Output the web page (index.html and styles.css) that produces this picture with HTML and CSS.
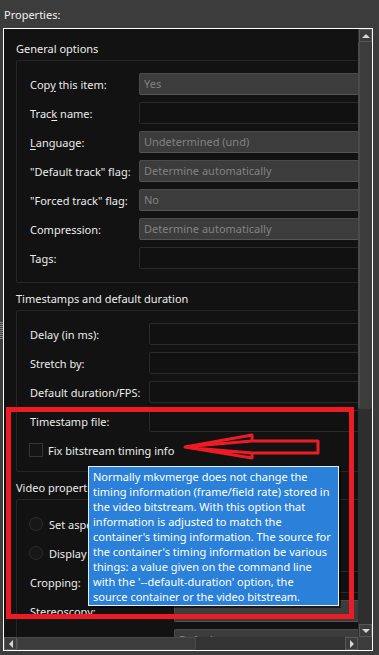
FILE: index.html
```html
<!DOCTYPE html>
<html>
<head>
<meta charset="utf-8">
<link rel="stylesheet" href="styles.css">
</head>
<body>
<div class="title">Properties:</div>
<div class="main">
  <div class="side"><div class="grip"></div></div>
  <div class="frame">
    <div class="viewport">
      <div class="content">
        <div class="group-title">General options</div>
        <div class="group g1">
          <div class="row"><span class="lbl">Cop<u>y</u> this item:</span><div class="combo">Yes</div></div>
          <div class="row"><span class="lbl">Trac<u>k</u> name:</span><div class="edit"></div></div>
          <div class="row"><span class="lbl"><u>L</u>anguage:</span><div class="combo">Undetermined (und)</div></div>
          <div class="row"><span class="lbl">"Default track" flag:</span><div class="combo">Determine automatically</div></div>
          <div class="row"><span class="lbl">"Forced track" flag:</span><div class="combo">No</div></div>
          <div class="row"><span class="lbl">Compression:</span><div class="combo">Determine automatically</div></div>
          <div class="row"><span class="lbl">Tags:</span><div class="edit"></div></div>
        </div>
        <div class="group-title">Timestamps and default duration</div>
        <div class="group g2">
          <div class="row"><span class="lbl">Delay (in ms):</span><div class="edit"></div></div>
          <div class="row"><span class="lbl">Stretch by:</span><div class="edit"></div></div>
          <div class="row"><span class="lbl">Default duration/FPS:</span><div class="edit"></div></div>
          <div class="row"><span class="lbl">Timestamp file:</span><div class="edit"></div></div>
          <div class="check-row"><span class="box"></span><span>Fix bitstream timing info</span></div>
        </div>
        <div class="group-title">Video properties</div>
        <div class="group g3">
          <div class="check-row"><span class="radio"></span><span>Set aspect ratio:</span></div>
          <div class="check-row"><span class="radio"></span><span>Display width/height:</span></div>
          <div class="row"><span class="lbl">Cropping:</span><div class="edit"></div></div>
          <div class="row"><span class="lbl">Stereoscopy:</span><div class="combo"></div></div>
          <div class="row"><span class="lbl">NAL Unit size length:</span><div class="combo">Default</div></div>
        </div>
      </div>
    </div>
    <div class="vscroll">
      <div class="sbtn"><span class="tri-up"></span></div>
      <div class="vthumb"></div>
      <div class="vtrack"></div>
      <div class="sbtn"><span class="tri-down"></span></div>
    </div>
    <div class="hscroll">
      <div class="sbtn"><span class="tri-left"></span></div>
      <div class="hthumb"></div>
      <div class="htrack"></div>
      <div class="sbtn"><span class="tri-right"></span></div>
    </div>
    <div class="corner"></div>
  </div>
</div>

<div class="annot-box"></div>
<svg class="arrow" width="379" height="655" viewBox="0 0 379 655">
  <path d="M185 447 L252 435 L252 441 L318 441 L318 453 L252 453 L252 458 Z M252 441 L194 446 M252 453 L194 448" fill="none" stroke="#ed1c24" stroke-width="3" stroke-linejoin="round" stroke-linecap="round"/>
</svg>
<div class="tooltip">Normally mkvmerge does not change the<br>timing information (frame/field rate) stored in<br>the video bitstream. With this option that<br>information is adjusted to match the<br>container's timing information. The source for<br>the container's timing information be various<br>things: a value given on the command line<br>with the '--default-duration' option, the<br>source container or the video bitstream.</div>
</body>
</html>
```

FILE: styles.css
```css
* { box-sizing: border-box; }
html, body { margin: 0; padding: 0; }
body {
  background: #3c3c3c;
  font-family: "Noto Sans", "Open Sans", sans-serif;
  font-size: 11px;
  line-height: 15px;
  color: #ececec;
  width: 379px;
  height: 655px;
  overflow: hidden;
  position: relative;
}
u { text-decoration: underline; text-underline-offset: 2px; }

.title {
  height: 28px;
  padding: 7px 0 0 4px;
  color: #f0f0f0;
}

.main { display: flex; height: 623px; }
.side { width: 3px; }
.grip {
  margin-top: 294px;
  height: 18px;
  width: 3px;
  background: repeating-linear-gradient(to bottom, #8a8a8a 0 1px, #3c3c3c 1px 2px);
}

.frame {
  width: 370px;
  height: 623px;
  border: 1px solid #ffffff;
  background: #121212;
  display: grid;
  grid-template-columns: 354px 14px;
  grid-template-rows: 608px 13px;
}

.viewport { overflow: hidden; position: relative; }
.content { width: 420px; padding: 12px 0 0 12px; }

.group-title { height: 15px; margin-bottom: 4px; white-space: nowrap; }
.group {
  border: 1px solid #262626;
  border-radius: 2px;
  padding: 12px 0 13px 13px;
  margin-bottom: 8px;
  display: flex;
  flex-direction: column;
  gap: 7px;
}
.g2 { padding-bottom: 10px; }
.g3 { padding-top: 13px; }

.row {
  display: grid;
  height: 22px;
  align-items: center;
  white-space: nowrap;
}
.g1 .row { grid-template-columns: 109px 1fr; }
.g2 .row { grid-template-columns: 119px 1fr; }
.g3 .row { grid-template-columns: 144px 1fr; }

.combo {
  height: 22px;
  background: #3c3c3c;
  border: 1px solid #4b4b4b;
  border-bottom-color: #555555;
  border-radius: 2px;
  padding-left: 4px;
  line-height: 20px;
  color: #828282;
}
.edit {
  height: 22px;
  background: #111111;
  border: 1px solid #2a2a2a;
  border-radius: 2px;
}

.check-row {
  height: 22px;
  display: flex;
  align-items: center;
  white-space: nowrap;
}
.box {
  width: 14px;
  height: 14px;
  margin-left: -1px;
  margin-right: 5px;
  border: 1px solid #343434;
  background: #141414;
}
.radio {
  width: 14px;
  height: 14px;
  margin-left: -1px;
  margin-right: 6px;
  border: 1px solid #2a2a2a;
  border-radius: 50%;
  background: #171717;
}

/* scrollbars */
.vscroll {
  display: flex;
  flex-direction: column;
  background: #2e2e2e;
}
.sbtn {
  background: #3c3c3c;
  border: 1px solid #585858;
  display: flex;
  align-items: center;
  justify-content: center;
  flex: none;
}
.vscroll .sbtn { height: 13px; margin-left: 1px; }
.vthumb {
  height: 367px;
  background: #3c3c3c;
  border-left: 2px solid #4a4a4a;
  border-radius: 0 0 3px 3px;
  margin-left: 0;
}
.vtrack { flex: 1; }

.hscroll {
  display: flex;
  background: #333333;
}
.hscroll .sbtn { width: 13px; }
.hthumb {
  width: 179px;
  background: #3c3c3c;
  border: 1px solid #4a4a4a;
  border-radius: 2px;
}
.htrack { flex: 1; }
.corner { background: #3c3c3c; }

.tri-up { width: 0; height: 0; border-left: 4px solid transparent; border-right: 4px solid transparent; border-bottom: 4px solid #d6d6d6; }
.tri-down { width: 0; height: 0; border-left: 4px solid transparent; border-right: 4px solid transparent; border-top: 4px solid #d6d6d6; }
.tri-left { width: 0; height: 0; border-top: 4px solid transparent; border-bottom: 4px solid transparent; border-right: 4px solid #d6d6d6; }
.tri-right { width: 0; height: 0; border-top: 4px solid transparent; border-bottom: 4px solid transparent; border-left: 4px solid #d6d6d6; }

/* annotations */
.annot-box {
  position: absolute;
  left: 6px;
  top: 407px;
  width: 348px;
  height: 212px;
  border: 5px solid #ed1c24;
}
.arrow { position: absolute; left: 0; top: 0; pointer-events: none; }
.tooltip {
  position: absolute;
  left: 88px;
  top: 466px;
  width: 251px;
  height: 140px;
  background: #2b81d9;
  border: 1px solid #e8eef6;
  box-shadow: 2px 2px 0 rgba(0,0,0,0.55);
  color: #ffffff;
  padding: 2px 0 0 4px;
  white-space: nowrap;
  overflow: hidden;
}
```
